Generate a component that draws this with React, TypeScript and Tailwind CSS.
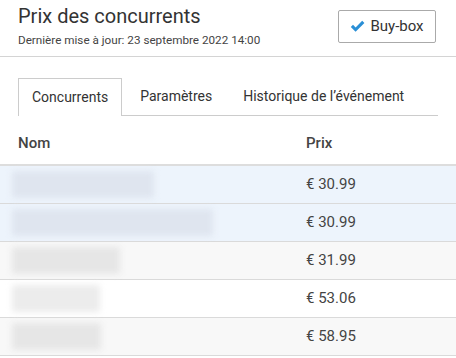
import React from "react";

const rows = [
  { price: "€ 30.99", bg: "bg-[#edf4fc]", w: 142, blur: "bg-[#dfe5ef]" },
  { price: "€ 30.99", bg: "bg-[#edf4fc]", w: 201, blur: "bg-[#dfe5ef]" },
  { price: "€ 31.99", bg: "bg-[#f8f8f8]", w: 108, blur: "bg-[#e6e6e6]" },
  { price: "€ 53.06", bg: "bg-white", w: 88, blur: "bg-[#ececec]" },
  { price: "€ 58.95", bg: "bg-[#f8f8f8]", w: 89, blur: "bg-[#e6e6e6]" },
];

export default function App() {
  return (
    <div className="w-[456px] h-[358px] overflow-hidden bg-white text-[#333]" style={{ fontFamily: "Roboto, 'Liberation Sans', sans-serif" }}>
      <div className="flex items-start justify-between h-[57px] pl-[18px] pr-[20px] border-b border-[#d4d4d4]">
        <div className="pt-[4px]">
          <div className="text-[20px] leading-[24px] text-[#333]">Prix des concurrents</div>
          <div className="text-[11.7px] leading-[14px] text-[#444] mt-[5px]">Dernière mise à jour: 23 septembre 2022 14:00</div>
        </div>
        <button className="mt-[10px] h-[33px] w-[98px] flex items-center justify-center gap-[5px] border border-[#aaa] rounded-[2px] bg-white text-[15px] text-[#333]">
          <svg width="15" height="13" viewBox="0 0 15 13">
            <path d="M0.8 7 L3 4.8 L5.6 7.4 L12.2 0.8 L14.4 3 L5.6 11.8 Z" fill="#2a8fd6" />
          </svg>
          Buy-box
        </button>
      </div>
      <div className="pt-[21px] px-[18px]">
        <div className="flex gap-[5px] border-b border-[#ccc] h-[38px]">
          <div className="px-[13px] flex items-center border border-[#ccc] border-b-0 bg-white -mb-px h-[38px] text-[14px] text-[#333]">Concurrents</div>
          <div className="px-[13px] flex items-center text-[14px] text-[#333]">Paramètres</div>
          <div className="px-[13px] flex items-center text-[14px] text-[#333]">Historique de l’événement</div>
        </div>
      </div>
      <div className="flex items-center h-[50px] pt-[6px] border-b-2 border-[#ddd] text-[15px] font-medium text-[#444]">
        <div className="pl-[18px] w-[305px]">Nom</div>
        <div className="pl-[1px]">Prix</div>
      </div>
      {rows.map((r, i) => (
        <div key={i} className={`flex items-center h-[38px] border-b border-[#dadada] ${r.bg}`}>
          <div className="w-[305px] pl-[12px]">
            <div className={`h-[27px] ${r.blur} blur-[3px] rounded-[2px]`} style={{ width: r.w }} />
          </div>
          <div className="pl-[1px] text-[15px] text-[#444]">{r.price}</div>
        </div>
      ))}
    </div>
  );
}
